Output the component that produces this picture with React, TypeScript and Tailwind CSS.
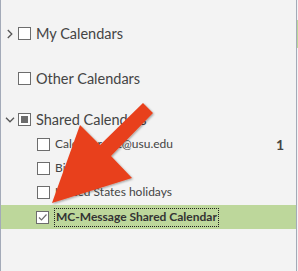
import React from "react";

function Box({ state }: { state?: "checked" | "mixed" }) {
    return (
        <span className="w-[13px] h-[13px] border border-[#6d6d6d] bg-white flex items-center justify-center shrink-0">
            {state === "mixed" && <span className="w-[7px] h-[7px] bg-[#6d6d6d]" />}
            {state === "checked" && (
                <svg width="11" height="11" viewBox="0 0 11 11">
                    <path d="M2 5.5 L4.5 8 L9.5 2.5" fill="none" stroke="#6d6d6d" strokeWidth="1.2" />
                </svg>
            )}
        </span>
    );
}

function Chevron({ open }: { open?: boolean }) {
    return (
        <span className="w-[17px] flex justify-center shrink-0">
            {open ? (
                <svg width="10" height="6" viewBox="0 0 10 6">
                    <path d="M1 0.8 L5 4.8 L9 0.8" fill="none" stroke="#555" strokeWidth="1.3" />
                </svg>
            ) : (
                <svg width="6" height="10" viewBox="0 0 6 10">
                    <path d="M0.8 1 L4.8 5 L0.8 9" fill="none" stroke="#555" strokeWidth="1.3" />
                </svg>
            )}
        </span>
    );
}

function Group({ label, open, state, className }: { label: string; open?: boolean; state?: "mixed"; className?: string }) {
    return (
        <div className={"flex items-center h-[25px] " + (className || "")}>
            {open === undefined ? <span className="w-[17px]" /> : <Chevron open={open} />}
            <Box state={state} />
            <span className="ml-[5px] text-[14.5px] text-[#444]">{label}</span>
        </div>
    );
}

function Item({ label, count }: { label: string; count?: string }) {
    return (
        <div className="flex items-center h-[24px] pl-[36px] pr-[12px]">
            <Box />
            <span className="ml-[5px] text-[12px] text-[#444] flex-1">{label}</span>
            {count && <span className="text-[14px] font-bold text-[#444]">{count}</span>}
        </div>
    );
}

export default function App() {
    return (
        <div className="w-[298px] h-[271px] flex bg-[#f3f3f3] font-['Lato',sans-serif] overflow-hidden relative">
            <div className="w-[297px] h-full border-l border-r border-[#a3aab8] pt-[21px]">
                <Group label="My Calendars" open={false} />
                <Group label="Other Calendars" className="mt-[20px]" />
                <Group label="Shared Calendars" open state="mixed" className="mt-[16px]" />
                <Item label="Calendar-cct@usu.edu" count="1" />
                <Item label="Birthdays" />
                <Item label="United States holidays" />
                <div className="flex items-center h-[24px] mt-px pl-[35px] bg-[#bdd79b]">
                    <Box state="checked" />
                    <span className="ml-[5px] px-px h-[19px] flex items-center border border-dotted border-[#222] text-[12px] font-bold text-[#333]">
                        MC-Message Shared Calendar
                    </span>
                </div>
            </div>
            <div className="w-px h-full flex flex-col">
                <div className="h-[20px] bg-[#f3f3f3]" />
                <div className="h-[28px] bg-[#bdd79b]" />
                <div className="flex-1 bg-[#f3f3f3]" />
            </div>
            <svg className="absolute inset-0 pointer-events-none" width="298" height="271" viewBox="0 0 298 271">
                <defs>
                    <filter id="sh" x="-20%" y="-20%" width="140%" height="140%">
                        <feDropShadow dx="1" dy="1" stdDeviation="1" floodColor="#000" floodOpacity="0.35" />
                    </filter>
                </defs>
                <polygon
                    points="52,203 80,125 100,145 143,103 153,113 111,156 132,178"
                    fill="#e8411c"
                    filter="url(#sh)"
                />
            </svg>
        </div>
    );
}
